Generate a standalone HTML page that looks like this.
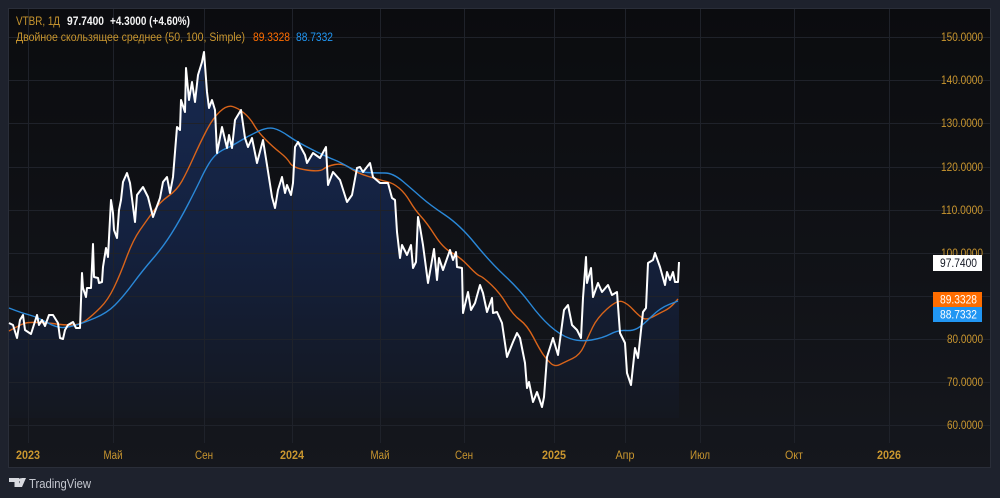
<!DOCTYPE html>
<html><head><meta charset="utf-8">
<style>
html,body{margin:0;padding:0;width:1000px;height:498px;overflow:hidden;background:#1e222d}
svg{display:block;filter:blur(.3px)}
text{font-family:"Liberation Sans","DejaVu Sans",sans-serif}
</style></head>
<body>
<svg width="1000" height="498" viewBox="0 0 1000 498" xmlns="http://www.w3.org/2000/svg">
<defs>
<linearGradient id="bg" x1="0" y1="0" x2="0" y2="1"><stop offset="0" stop-color="#0b0c0f"/><stop offset="1" stop-color="#15171d"/></linearGradient>
<linearGradient id="ar" gradientUnits="userSpaceOnUse" x1="0" y1="52" x2="0" y2="420"><stop offset="0" stop-color="#17294f"/><stop offset=".5" stop-color="#14213f"/><stop offset="1" stop-color="#14171f"/></linearGradient>
</defs>
<rect x="0" y="0" width="1000" height="498" fill="#1e222d"/>
<rect x="8.5" y="8.5" width="982" height="459" fill="url(#bg)" stroke="#2a2e39"/>
<path d="M679 418V262L678 282L675 282L673 272L670 280L667 272L665 285L660 267L655 253L653 260L648 263L646 308L643 312L638 358L635 348L631 385L627 373L625 343L620 333L617 292L612 295L608 285L602 292L598 283L593 297L591 268L587 283L586 257L583 298L581 338L577 330L572 325L568 305L564 310L558 355L553 338L547 357L544 397L542 407L537 392L533 402L529 382L527 388L525 363L520 338L517 333L513 342L507 357L502 323L497 312L493 313L492 298L487 312L483 293L480 285L475 303L471 310L468 292L463 313L462 268L457 267L456 252L453 260L450 250L443 270L439 258L437 280L434 249L428 283L423 245L420 227L418 217L416 262L413 268L411 245L407 255L402 245L400 258L397 232L395 200L392 198L388 183L380 183L373 177L370 163L363 172L360 167L357 168L352 195L347 202L340 180L333 172L328 185L326 147L320 158L313 153L307 163L305 155L298 142L295 147L293 183L291 195L287 185L285 193L282 177L278 190L275 208L272 197L267 165L263 140L257 163L252 138L248 147L245 138L241 110L235 120L232 148L229 135L227 148L222 127L217 153L215 110L212 100L209 108L207 92L204 52L202 62L198 75L195 102L192 82L189 100L186 68L185 112L181 100L180 130L177 127L173 177L170 193L167 177L163 182L160 198L153 217L148 197L143 187L137 195L135 222L130 183L127 173L123 182L121 200L119 210L117 238L114 230L113 213L111 200L108 257L106 248L103 267L102 282L99 283L98 278L94 277L93 244L91 288L87 288L86 297L83 288L82 273L80 328L76 328L73 322L68 325L65 330L63 339L60 338L58 323L53 315L49 315L45 326L42 320L39 325L37 315L31 334L25 330L23 315L20 320L17 338L13 325L9 323V418Z" fill="url(#ar)"/>
<g stroke="#1f222a" stroke-width="1" fill="none">
<path d="M9 37.5H990M9 80.5H990M9 123.5H990M9 167.5H990M9 210.5H990M9 253.5H990M9 296.5H990M9 339.5H990M9 382.5H990M9 425.5H990"/>
<path d="M28.5 9V443M113.5 9V443M204.5 9V443M292.5 9V443M380.5 9V443M464.5 9V443M554.5 9V443M625.5 9V443M700.5 9V443M794.5 9V443M889.5 9V443"/>
</g>
<path d="M9 331Q20 325 24 323.5Q28 322 39 322.5Q50 323 56.5 324Q63 325 71.5 325Q80 325 86.5 320Q93 315 100.5 307.5Q108 300 114 287.5Q120 275 126.5 257.5Q133 240 140 230Q147 220 153.5 211Q160 202 168.5 196Q177 190 182 181Q187 172 193.5 157.5Q200 143 206.5 130.5Q213 118 220 111.5Q227 105 232.5 106.5Q238 108 244 113Q250 118 254 125Q258 132 265.5 139.5Q273 147 280 152.5Q287 158 290 163Q293 168 306.5 170Q320 172 323.5 169Q327 166 335 164.5Q343 163 350 168Q357 173 368.5 176.5Q380 180 386.5 181.5Q393 183 399 188Q405 193 410 201.5Q415 210 421 216.5Q427 223 435 235.5Q443 248 451.5 252.5Q460 257 468.5 266Q477 275 480 276Q483 277 491.5 285Q500 293 506.5 304Q513 315 520 320Q527 325 533.5 337.5Q540 350 543.5 355Q547 360 551 363.5Q555 367 560 364.5Q565 362 572.5 358.5Q580 355 584 346Q588 337 592.5 327.5Q597 318 607 309Q617 300 622 301.5Q627 303 633.5 310Q640 317 643.5 318.5Q647 320 653.5 316.5Q660 313 665 310.5Q670 308 674 303.5L678 299" fill="none" stroke="#d9641a" stroke-width="1.4" stroke-linejoin="round"/>
<path d="M9 308L15.5 310.5Q22 313 29.5 315Q37 317 47 322.5Q57 328 63.5 327.5Q70 327 76.5 325Q83 323 95 318Q107 313 115 305Q123 297 133 283.5Q143 270 153 258.5Q163 247 171.5 233.5Q180 220 188.5 203.5Q197 187 201 178.5Q205 170 209 163.5Q213 157 217.5 153.5Q222 150 226 148.5Q230 147 240 141Q250 135 259 131Q268 127 274 128.5Q280 130 288.5 136Q297 142 312 149.5Q327 157 333.5 159.5Q340 162 348.5 167Q357 172 367 172.5Q377 173 385 173Q393 173 403 181.5Q413 190 421.5 197.5Q430 205 445 215Q460 225 475 243.5Q490 262 505 276Q520 290 530 303.5Q540 317 550 326Q560 335 570 338.5Q580 342 591.5 340Q603 338 610.5 334Q618 330 625.5 330.5Q633 331 638 328Q643 325 651.5 316.5Q660 308 669 304.5L678 301" fill="none" stroke="#2a88d8" stroke-width="1.4" stroke-linejoin="round"/>
<path d="M9 323L13 325L17 338L20 320L23 315L25 330L31 334L37 315L39 325L42 320L45 326L49 315L53 315L58 323L60 338L63 339L65 330L68 325L73 322L76 328L80 328L82 273L83 288L86 297L87 288L91 288L93 244L94 277L98 278L99 283L102 282L103 267L106 248L108 257L111 200L113 213L114 230L117 238L119 210L121 200L123 182L127 173L130 183L135 222L137 195L143 187L148 197L153 217L160 198L163 182L167 177L170 193L173 177L177 127L180 130L181 100L185 112L186 68L189 100L192 82L195 102L198 75L202 62L204 52L207 92L209 108L212 100L215 110L217 153L222 127L227 148L229 135L232 148L235 120L241 110L245 138L248 147L252 138L257 163L263 140L267 165L272 197L275 208L278 190L282 177L285 193L287 185L291 195L293 183L295 147L298 142L305 155L307 163L313 153L320 158L326 147L328 185L333 172L340 180L347 202L352 195L357 168L360 167L363 172L370 163L373 177L380 183L388 183L392 198L395 200L397 232L400 258L402 245L407 255L411 245L413 268L416 262L418 217L420 227L423 245L428 283L434 249L437 280L439 258L443 270L450 250L453 260L456 252L457 267L462 268L463 313L468 292L471 310L475 303L480 285L483 293L487 312L492 298L493 313L497 312L502 323L507 357L513 342L517 333L520 338L525 363L527 388L529 382L533 402L537 392L542 407L544 397L547 357L553 338L558 355L564 310L568 305L572 325L577 330L581 338L583 298L586 257L587 283L591 268L593 297L598 283L602 292L608 285L612 295L617 292L620 333L625 343L627 373L631 385L635 348L638 358L643 312L646 308L648 263L653 260L655 253L660 267L665 285L667 272L670 280L673 272L675 282L678 282L679 262" fill="none" stroke="#ffffff" stroke-width="2" stroke-linejoin="round"/>
<g font-size="11.5" fill="#c9962f" text-anchor="end" lengthAdjust="spacingAndGlyphs">
<text x="983" y="41" textLength="42" lengthAdjust="spacingAndGlyphs">150.0000</text>
<text x="983" y="84" textLength="42" lengthAdjust="spacingAndGlyphs">140.0000</text>
<text x="983" y="127" textLength="42" lengthAdjust="spacingAndGlyphs">130.0000</text>
<text x="983" y="171" textLength="42" lengthAdjust="spacingAndGlyphs">120.0000</text>
<text x="983" y="214" textLength="42" lengthAdjust="spacingAndGlyphs">110.0000</text>
<text x="983" y="257" textLength="42" lengthAdjust="spacingAndGlyphs">100.0000</text>
<text x="983" y="343" textLength="36" lengthAdjust="spacingAndGlyphs">80.0000</text>
<text x="983" y="386" textLength="36" lengthAdjust="spacingAndGlyphs">70.0000</text>
<text x="983" y="429" textLength="36" lengthAdjust="spacingAndGlyphs">60.0000</text>
</g>
<rect x="933" y="255" width="49" height="16" fill="#fff"/>
<text x="977" y="267" font-size="11.5" fill="#131722" text-anchor="end" textLength="37" lengthAdjust="spacingAndGlyphs">97.7400</text>
<rect x="933" y="292" width="49" height="15" fill="#ff6d00"/>
<text x="977" y="303.5" font-size="11.5" fill="#fff" text-anchor="end" textLength="37" lengthAdjust="spacingAndGlyphs">89.3328</text>
<rect x="933" y="307" width="49" height="15" fill="#2196f3"/>
<text x="977" y="318.5" font-size="11.5" fill="#fff" text-anchor="end" textLength="37" lengthAdjust="spacingAndGlyphs">88.7332</text>
<g font-size="11.5" fill="#c9962f" text-anchor="middle">
<text x="28" y="459" font-weight="bold" textLength="24" lengthAdjust="spacingAndGlyphs">2023</text>
<text x="113" y="459" textLength="19" lengthAdjust="spacingAndGlyphs">Май</text>
<text x="204" y="459" textLength="18" lengthAdjust="spacingAndGlyphs">Сен</text>
<text x="292" y="459" font-weight="bold" textLength="24" lengthAdjust="spacingAndGlyphs">2024</text>
<text x="380" y="459" textLength="19" lengthAdjust="spacingAndGlyphs">Май</text>
<text x="464" y="459" textLength="18" lengthAdjust="spacingAndGlyphs">Сен</text>
<text x="554" y="459" font-weight="bold" textLength="24" lengthAdjust="spacingAndGlyphs">2025</text>
<text x="625" y="459" textLength="19" lengthAdjust="spacingAndGlyphs">Апр</text>
<text x="700" y="459" textLength="20" lengthAdjust="spacingAndGlyphs">Июл</text>
<text x="794" y="459" textLength="18" lengthAdjust="spacingAndGlyphs">Окт</text>
<text x="889" y="459" font-weight="bold" textLength="24" lengthAdjust="spacingAndGlyphs">2026</text>
</g>
<text x="16" y="25" font-size="11.5" fill="#c9962f" textLength="44" lengthAdjust="spacingAndGlyphs">VTBR, 1Д</text>
<text x="67" y="25" font-size="11.5" fill="#f4f4f4" font-weight="bold" textLength="37" lengthAdjust="spacingAndGlyphs">97.7400</text>
<text x="110" y="25" font-size="11.5" fill="#f4f4f4" font-weight="bold" textLength="80" lengthAdjust="spacingAndGlyphs">+4.3000 (+4.60%)</text>
<text x="16" y="41" font-size="11.5" fill="#c9962f" textLength="229" lengthAdjust="spacingAndGlyphs">Двойное скользящее среднее (50, 100, Simple)</text>
<text x="253" y="41" font-size="11.5" fill="#ff6d00" textLength="37" lengthAdjust="spacingAndGlyphs">89.3328</text>
<text x="296" y="41" font-size="11.5" fill="#2196f3" textLength="37" lengthAdjust="spacingAndGlyphs">88.7332</text>
<path d="M9 478H19V487H14.5V482H9ZM21.5 478H26L22 487H17.5Z" fill="#d8dae0"/>
<circle cx="20.5" cy="480" r="1.7" fill="#d8dae0"/>
<text x="29" y="488" font-size="12.5" fill="#c4c7cf" textLength="62" lengthAdjust="spacingAndGlyphs">TradingView</text>
</svg>
</body></html>
